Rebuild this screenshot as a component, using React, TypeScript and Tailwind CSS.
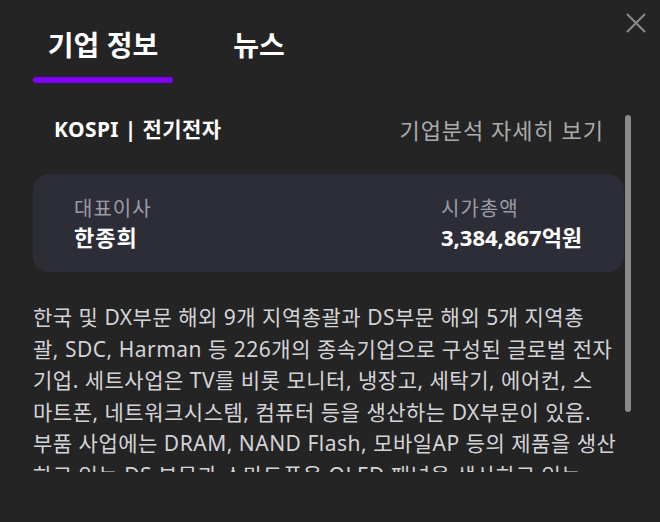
import React from "react";

const lines = [
  "한국 및 DX부문 해외 9개 지역총괄과 DS부문 해외 5개 지역총",
  "괄, SDC, Harman 등 226개의 종속기업으로 구성된 글로벌 전자",
  "기업. 세트사업은 TV를 비롯 모니터, 냉장고, 세탁기, 에어컨, 스",
  "마트폰, 네트워크시스템, 컴퓨터 등을 생산하는 DX부문이 있음.",
  "부품 사업에는 DRAM, NAND Flash, 모바일AP 등의 제품을 생산",
  "하고 있는 DS 부문과 스마트폰용 OLED 패널을 생산하고 있는",
  "SDC 등으로 구성됨.",
];

export default function App() {
  return (
    <div
      className="relative w-[660px] h-[522px] bg-[#242424] overflow-hidden"
      style={{ fontFamily: '"Noto Sans", "Noto Sans CJK KR", sans-serif' }}
    >
      <button className="absolute top-[13px] right-[14px] w-[20px] h-[20px]" aria-label="닫기">
        <svg width="20" height="20" viewBox="0 0 20 20">
          <path d="M1 1 L19 19 M19 1 L1 19" stroke="#8a8a8a" strokeWidth="2" />
        </svg>
      </button>

      <div className="flex pl-[33px] pt-[26px] gap-[16px]">
        <div className="w-[140px] flex flex-col items-center">
          <span className="text-[28px] font-bold text-white leading-[38px]">기업 정보</span>
          <div className="mt-[13px] w-[140px] h-[6px] rounded-full bg-[#7f00ff]" />
        </div>
        <div className="w-[140px] flex flex-col items-center">
          <span className="text-[28px] font-bold text-white leading-[38px]">뉴스</span>
        </div>
      </div>

      <div className="relative mt-[29px] h-[360px] overflow-hidden pl-[33px] pr-[36px]">
        <div className="absolute right-[29px] top-[3px] w-[6px] h-[297px] rounded-full bg-[#8a8a8a]" />
        <div className="flex items-center justify-between pl-[21px] pr-[20px] h-[36px]">
          <span className="text-[21px] font-bold text-white tracking-[0.4px]">KOSPI | 전기전자</span>
          <span className="text-[22px] text-[#ababab] tracking-[1px]">기업분석 자세히 보기</span>
        </div>
        <div className="mt-[26px] h-[98px] rounded-[16px] bg-[#2d2d38] flex items-center pl-[41px]">
          <div className="w-[367px] flex flex-col">
            <span className="text-[20px] text-[#9c9ca4] leading-[28.5px] tracking-[1px]">대표이사</span>
            <span className="text-[22px] font-bold text-white leading-[28.5px] tracking-[1px]">한종희</span>
          </div>
          <div className="flex flex-col">
            <span className="text-[20px] text-[#9c9ca4] leading-[28.5px] tracking-[1px]">시가총액</span>
            <span className="text-[22px] font-bold text-white leading-[28.5px]">3,384,867억원</span>
          </div>
        </div>
        <div className="mt-[30px] text-[21px] leading-[31.6px] text-[#d4d4d8] tracking-[0.5px]">
          {lines.map((l, i) => (
            <div key={i} className="whitespace-nowrap">
              {l}
            </div>
          ))}
        </div>
      </div>
    </div>
  );
}
